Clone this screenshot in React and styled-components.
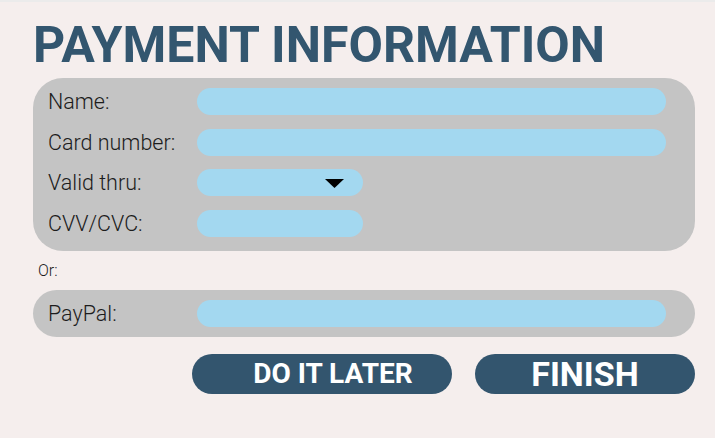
import React from 'react';
import styled, { createGlobalStyle } from 'styled-components';

const GlobalStyle = createGlobalStyle`
  html, body {
    margin: 0;
    padding: 0;
    background: #f5eeed;
  }
  body {
    font-family: Roboto, "Liberation Sans", sans-serif;
  }
`;

const Page = styled.div`
  width: 715px;
  height: 438px;
  box-sizing: border-box;
  border-top: 2px solid #ebebeb;
  padding: 19px 20px 0 33px;
  display: flex;
  flex-direction: column;
`;

const Title = styled.h1`
  margin: 0 0 8px 0;
  font-size: 50px;
  line-height: 49px;
  font-weight: 700;
  color: #33566f;
`;

const Panel = styled.div`
  background: #c4c4c4;
  border-radius: ${props => props.$radius || 30}px;
  padding: ${props => props.$padding || '10px 29px 14px 15px'};
  display: grid;
  grid-template-columns: 149px 1fr;
  row-gap: 13.67px;
  align-items: center;
`;

const Label = styled.label`
  font-size: 21.5px;
  font-weight: 300;
  color: #1c1c1c;
  line-height: 27px;
  white-space: nowrap;
`;

const Field = styled.div`
  position: relative;
  height: 27px;
  width: ${props => (props.$short ? '166px' : 'auto')};
  border-radius: 14px;
  background: #a3d8f0;
`;

const Arrow = styled.svg`
  position: absolute;
  right: 19px;
  top: 10px;
`;

const Or = styled.div`
  font-size: 16px;
  font-weight: 300;
  color: #1c1c1c;
  padding: 11px 0 0 5px;
  height: 28px;
  line-height: 18px;
  box-sizing: border-box;
  margin-bottom: 11px;
`;

const Actions = styled.div`
  display: flex;
  justify-content: flex-end;
  gap: 23px;
  margin-top: 17px;
`;

const Button = styled.button`
  width: ${props => props.$width}px;
  height: 40px;
  border: none;
  border-radius: 20px;
  background: #33556e;
  color: #ffffff;
  font-family: Roboto, "Liberation Sans", sans-serif;
  font-weight: 700;
  font-size: ${props => props.$size}px;
  padding: 0 0 0 ${props => props.$shift || 0}px;
  line-height: 40px;
  cursor: pointer;
`;

const Row = ({ label, short, dropdown }) => (
  <>
    <Label>{label}</Label>
    <Field $short={short}>
      {dropdown && (
        <Arrow width="19" height="9" viewBox="0 0 19 9">
          <polygon points="0,0 19,0 9.5,9" fill="#000" />
        </Arrow>
      )}
    </Field>
  </>
);

const App = () => (
  <>
    <GlobalStyle />
    <Page>
      <Title>PAYMENT INFORMATION</Title>
      <Panel>
        <Row label="Name:" />
        <Row label="Card number:" />
        <Row label="Valid thru:" short dropdown />
        <Row label="CVV/CVC:" short />
      </Panel>
      <Or>Or:</Or>
      <Panel $radius={24} $padding="10px 29px 10px 15px">
        <Row label="PayPal:" />
      </Panel>
      <Actions>
        <Button $width={260} $size={28} $shift={22}>DO IT LATER</Button>
        <Button $width={220} $size={34}>FINISH</Button>
      </Actions>
    </Page>
  </>
);

export default App;
